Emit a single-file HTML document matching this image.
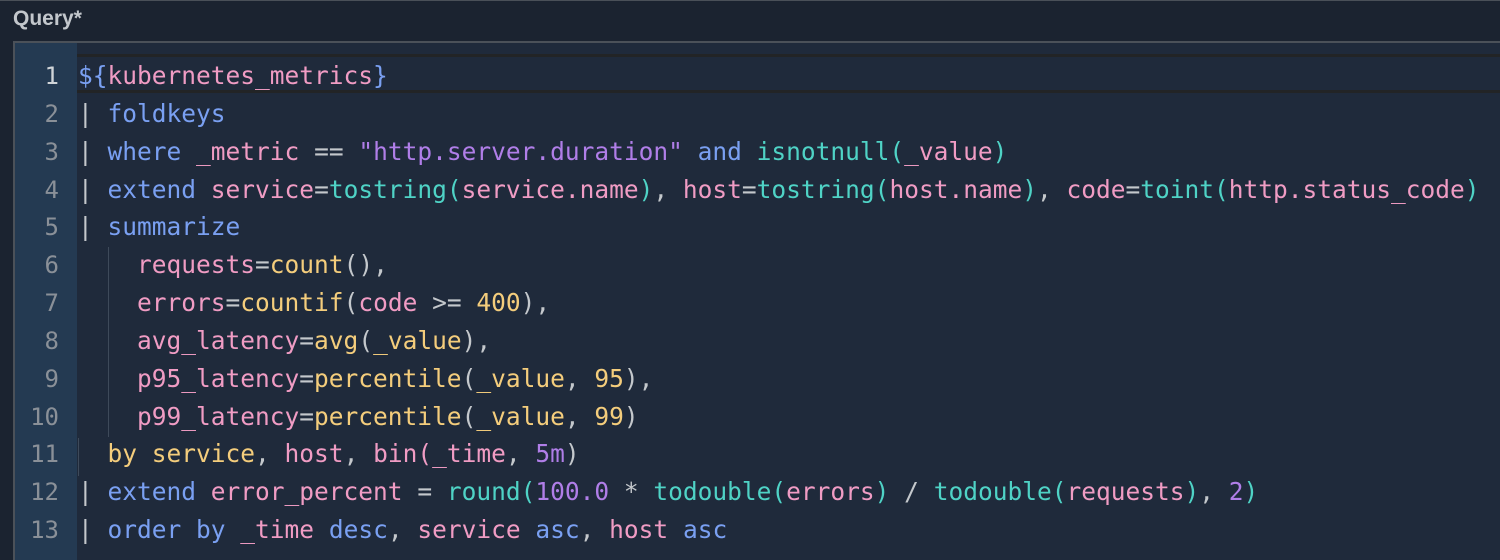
<!DOCTYPE html>
<html><head><style>
html,body{margin:0;padding:0}
body{width:1500px;height:560px;background:#1b2330;position:relative;overflow:hidden;font-family:"Liberation Sans",sans-serif}
.top{position:absolute;left:0;top:0;width:1500px;height:1px;background:#4a5058}
.title{position:absolute;left:13px;top:7px;font-size:21px;font-weight:bold;color:#c3c7cc}
.ed{position:absolute;left:13px;top:41px;width:1487px;height:519px;border-left:2px solid #4b5159;border-top:2px solid #4b5159;background:#1f2a3b;box-sizing:border-box}
.gut{position:absolute;left:15px;top:43px;width:62px;height:517px;background:#243a52}
.hl{position:absolute;left:77px;top:54px;width:1423px;height:39px;border-top:3px solid #222426;border-bottom:3px solid #222426;box-sizing:border-box}
.ln{position:absolute;left:15px;width:44px;text-align:right;font-family:"DejaVu Sans Mono",monospace;font-size:24px;color:#8a9098;line-height:38px}
.ln.a{color:#d0d4d8}
.cl{position:absolute;left:78px;font-family:"DejaVu Sans Mono",monospace;font-size:24.5px;line-height:38px;color:#c4c8cc;white-space:pre}
.b{color:#7aa0f2}.p{color:#f09cc4}.c{color:#4fd3c6}.y{color:#f4cd7c}.v{color:#b07ee8}.g{color:#c4c8cc}
.guide{position:absolute;left:108px;top:247px;width:1px;height:190px;background:#3e4a5a}
.guide2{position:absolute;left:78px;top:438px;width:1px;height:38px;background:#3e4a5a}
</style></head><body>
<div class="top"></div>
<div class="title">Query*</div>
<div class="ed"></div>
<div class="gut"></div>
<div class="hl"></div>
<div class="guide"></div><div class="guide2"></div>
<div class="ln a" style="top:57px">1</div>
<div class="ln" style="top:95px">2</div>
<div class="ln" style="top:133px">3</div>
<div class="ln" style="top:171px">4</div>
<div class="ln" style="top:208px">5</div>
<div class="ln" style="top:246px">6</div>
<div class="ln" style="top:284px">7</div>
<div class="ln" style="top:322px">8</div>
<div class="ln" style="top:360px">9</div>
<div class="ln" style="top:398px">10</div>
<div class="ln" style="top:435px">11</div>
<div class="ln" style="top:473px">12</div>
<div class="ln" style="top:511px">13</div>

<div class="cl" style="top:57px"><span class="b">${</span><span class="p">kubernetes_metrics</span><span class="b">}</span></div>
<div class="cl" style="top:95px">| <span class="b">foldkeys</span></div>
<div class="cl" style="top:133px">| <span class="b">where</span> <span class="p">_metric</span> == <span class="v">"http.server.duration"</span> <span class="b">and</span> <span class="c">isnotnull(</span><span class="p">_value</span><span class="c">)</span></div>
<div class="cl" style="top:171px">| <span class="b">extend</span> <span class="p">service</span>=<span class="c">tostring(</span><span class="p">service.name</span><span class="c">)</span>, <span class="p">host</span>=<span class="c">tostring(</span><span class="p">host.name</span><span class="c">)</span>, <span class="p">code</span>=<span class="c">toint(</span><span class="p">http.status_code</span><span class="c">)</span></div>
<div class="cl" style="top:208px">| <span class="b">summarize</span></div>
<div class="cl" style="top:246px">    <span class="p">requests</span>=<span class="y">count</span>(),</div>
<div class="cl" style="top:284px">    <span class="p">errors</span>=<span class="y">countif</span>(<span class="p">code</span> &gt;= <span class="y">400</span>),</div>
<div class="cl" style="top:322px">    <span class="p">avg_latency</span>=<span class="y">avg</span>(<span class="y">_value</span>),</div>
<div class="cl" style="top:360px">    <span class="p">p95_latency</span>=<span class="y">percentile</span>(<span class="y">_value</span>, <span class="y">95</span>),</div>
<div class="cl" style="top:398px">    <span class="p">p99_latency</span>=<span class="y">percentile</span>(<span class="y">_value</span>, <span class="y">99</span>)</div>
<div class="cl" style="top:435px">  <span class="y">by service</span>, <span class="p">host</span>, <span class="p">bin(_time</span>, <span class="v">5m</span>)</div>
<div class="cl" style="top:473px">| <span class="b">extend</span> <span class="p">error_percent</span> = <span class="c">round(</span><span class="v">100.0</span> * <span class="c">todouble(</span><span class="p">errors</span><span class="c">)</span> / <span class="c">todouble(</span><span class="p">requests</span><span class="c">)</span>, <span class="v">2</span><span class="c">)</span></div>
<div class="cl" style="top:511px">| <span class="b">order by</span> <span class="p">_time</span> <span class="b">desc</span>, <span class="p">service</span> <span class="b">asc</span>, <span class="p">host</span> <span class="b">asc</span></div>
</body></html>
